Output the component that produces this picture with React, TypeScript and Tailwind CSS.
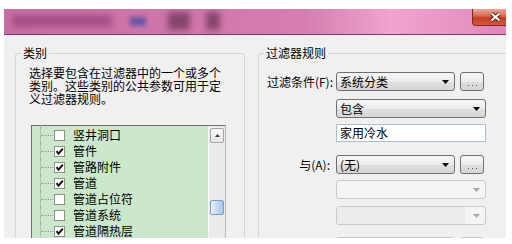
const rows = [
  { label: "竖井洞口", checked: false },
  { label: "管件", checked: true },
  { label: "管路附件", checked: true },
  { label: "管道", checked: true },
  { label: "管道占位符", checked: false },
  { label: "管道系统", checked: false },
  { label: "管道隔热层", checked: true },
];

const Arrow = ({ disabled }: { disabled?: boolean }) => (
  <svg width="7" height="4" viewBox="0 0 7 4" className="shrink-0">
    <path d="M0 0 H7 L3.5 4 Z" fill={disabled ? "#a8a8a8" : "#000"} />
  </svg>
);

const Combo = ({
  w,
  text,
  disabled,
  editable,
}: {
  w: string;
  text?: string;
  disabled?: boolean;
  editable?: boolean;
}) => {
  if (disabled) {
    return (
      <div
        className={`${w} h-[19px] rounded-[3px] border border-[#c9c9c9] bg-[#f4f4f4] flex items-center pr-[5px]`}
      >
        <div
          className={`flex-1 h-full ${editable ? "bg-[#ececec] mr-[8px]" : ""}`}
        />
        <Arrow disabled />
      </div>
    );
  }
  return (
    <div
      className={`${w} h-[19px] rounded-[3px] border border-[#707070] bg-[linear-gradient(180deg,#f6f6f6_0%,#ececec_50%,#e0e0e0_51%,#d6d6d6_100%)] flex items-center pl-[3px] pr-[5px]`}
    >
      <span className="flex-1 leading-none">{text}</span>
      <Arrow />
    </div>
  );
};

const DotsButton = () => (
  <div className="ml-[5px] w-[24px] h-[19px] rounded-[3px] border border-[#707070] bg-[linear-gradient(180deg,#f6f6f6_0%,#ececec_50%,#e0e0e0_51%,#d6d6d6_100%)] flex items-end justify-center pb-[4px] gap-[3px]">
    <span className="w-[1px] h-[1px] bg-[#555]" />
    <span className="w-[1px] h-[1px] bg-[#555]" />
    <span className="w-[1px] h-[1px] bg-[#555]" />
  </div>
);

const Check = ({ checked }: { checked: boolean }) => (
  <span className="w-[11px] h-[11px] border border-[#8f8f8f] bg-white flex items-center justify-center shrink-0">
    {checked && (
      <svg width="9" height="9" viewBox="0 0 9 9">
        <path
          d="M1.5 4.2 L3.6 6.6 L7.8 1.6"
          stroke="#111"
          strokeWidth="2"
          fill="none"
        />
      </svg>
    )}
  </span>
);

const TreeRow = ({ label, checked }: { label: string; checked: boolean }) => (
  <div className="h-[16px] flex items-center">
    <span className="ml-[8px] h-full border-l border-dotted border-[#9a9a9a]" />
    <span className="w-[12px] border-t border-dotted border-[#9a9a9a]" />
    <span className="ml-[1px]">
      <Check checked={checked} />
    </span>
    <span className="ml-[8px] leading-none">{label}</span>
  </div>
);

const App = () => {
  return (
    <div className="w-[512px] h-[244px] bg-white overflow-hidden font-['Noto_Sans_CJK_SC',sans-serif] text-[12px] text-black">
      <div className="ml-[4px] mt-[9px] w-[502px] h-[229px] overflow-hidden flex flex-col bg-[#f0f0f0]">
        {/* title bar, blurred */}
        <div className="h-[26px] shrink-0 border-b border-[#7a3a62] flex items-start bg-[linear-gradient(90deg,#c96fa4_0%,#cf76aa_35%,#d67eb1_60%,#f0a3cf_77%,#ea94c5_90%,#de85ba_100%)]">
          <div className="flex-1 min-w-0 flex items-center pl-[8px] pt-[3px]">
            <div className="w-[100px] h-[12px] bg-[#a54f86] blur-[3px]" />
            <div className="ml-[18px] w-[16px] h-[9px] bg-[#6656a4] blur-[2px]" />
            <div className="ml-[22px] w-[22px] h-[18px] bg-[#86466c] blur-[3px]" />
            <div className="ml-[16px] w-[14px] h-[18px] bg-[#86466c] blur-[3px]" />
          </div>
          <div className="shrink-0 w-[45px] mr-[-11px] h-[17px] rounded-bl-[4px] border-l border-b border-[#7b2a22] bg-[linear-gradient(180deg,#eba89a_0%,#d9664f_45%,#c63a20_55%,#d4583e_100%)] flex items-center justify-center">
            <svg width="11" height="10" viewBox="0 0 11 10">
              <path
                d="M1.5 1.5 L9.5 8.5 M9.5 1.5 L1.5 8.5"
                stroke="#5a1a14"
                strokeWidth="4"
              />
              <path
                d="M1.5 1.5 L9.5 8.5 M9.5 1.5 L1.5 8.5"
                stroke="#fff"
                strokeWidth="2.2"
              />
            </svg>
          </div>
        </div>

        {/* body */}
        <div className="flex-1 flex items-start pt-[11px]">
          <fieldset className="ml-[11px] w-[230px] h-[200px] shrink-0 border border-[#d3d6d9] rounded-[3px]">
            <legend className="ml-[5px] px-[2px] leading-[14px]">类别</legend>
            <p className="mt-[6px] ml-[13px] w-[196px] leading-[13px]">
              选择要包含在过滤器中的一个或多个类别。这些类别的公共参数可用于定义过滤器规则。
            </p>
            <div className="mt-[20px] ml-[15px] w-[195px] h-[130px] border border-[#b8b8b8] border-t-[#6f6f6f] border-l-[#6f6f6f] flex">
              <div className="flex-1 bg-[#cbe8cc] pt-[1px]">
                {rows.map((r) => (
                  <TreeRow key={r.label} label={r.label} checked={r.checked} />
                ))}
              </div>
              <div className="w-[17px] bg-[#ebebeb] border-l border-[#f8f8f8] pt-[2px] px-[1px]">
                <div className="h-[15px] rounded-[2px] border border-[#a3a3a3] bg-[linear-gradient(180deg,#fafafa_0%,#e6e6e6_100%)] flex items-center justify-center">
                  <svg width="5" height="3" viewBox="0 0 5 3">
                    <path d="M0 3 L2.5 0 L5 3 Z" fill="#3a3a3a" />
                  </svg>
                </div>
                <div className="mt-[57px] h-[15px] rounded-[2px] border border-[#7c9cbe] bg-[linear-gradient(90deg,#e9f2fb_0%,#c9dcf0_45%,#a9c6e6_100%)]" />
              </div>
            </div>
          </fieldset>

          <fieldset className="ml-[13px] w-[270px] h-[200px] shrink-0 border border-[#d3d6d9] rounded-[3px]">
            <legend className="ml-[5px] px-[2px] leading-[14px]">过滤器规则</legend>
            <div className="flex flex-col">
              <div className="mt-[12px] flex items-center">
                <span className="w-[75px] text-right pr-[1px] leading-none">
                  过滤条件(F):
                </span>
                <div className="ml-[2px] flex">
                  <Combo w="w-[119px]" text="系统分类" />
                  <DotsButton />
                </div>
              </div>
              <div className="mt-[8px] ml-[77px] flex">
                <Combo w="w-[150px]" text="包含" />
              </div>
              <div className="mt-[6px] ml-[77px] w-[150px] h-[18px] border border-[#a7bed9] bg-white flex items-center pl-[3px]">
                <span className="leading-none">家用冷水</span>
              </div>
              <div className="mt-[13px] flex items-center">
                <span className="w-[75px] text-right pr-[4px] leading-none">
                  与(A):
                </span>
                <div className="ml-[2px] flex">
                  <Combo w="w-[119px]" text="(无)" />
                  <DotsButton />
                </div>
              </div>
              <div className="mt-[6px] ml-[77px] flex">
                <Combo w="w-[150px]" disabled />
              </div>
              <div className="mt-[7px] ml-[77px] flex">
                <Combo w="w-[150px]" disabled editable />
              </div>
              <div className="mt-[12px] ml-[77px] flex">
                <Combo w="w-[119px]" disabled />
                <div className="ml-[5px] w-[24px] h-[19px] rounded-[3px] border border-[#c9c9c9] bg-[#f4f4f4]" />
              </div>
            </div>
          </fieldset>
        </div>
      </div>
    </div>
  );
};

export default App;
